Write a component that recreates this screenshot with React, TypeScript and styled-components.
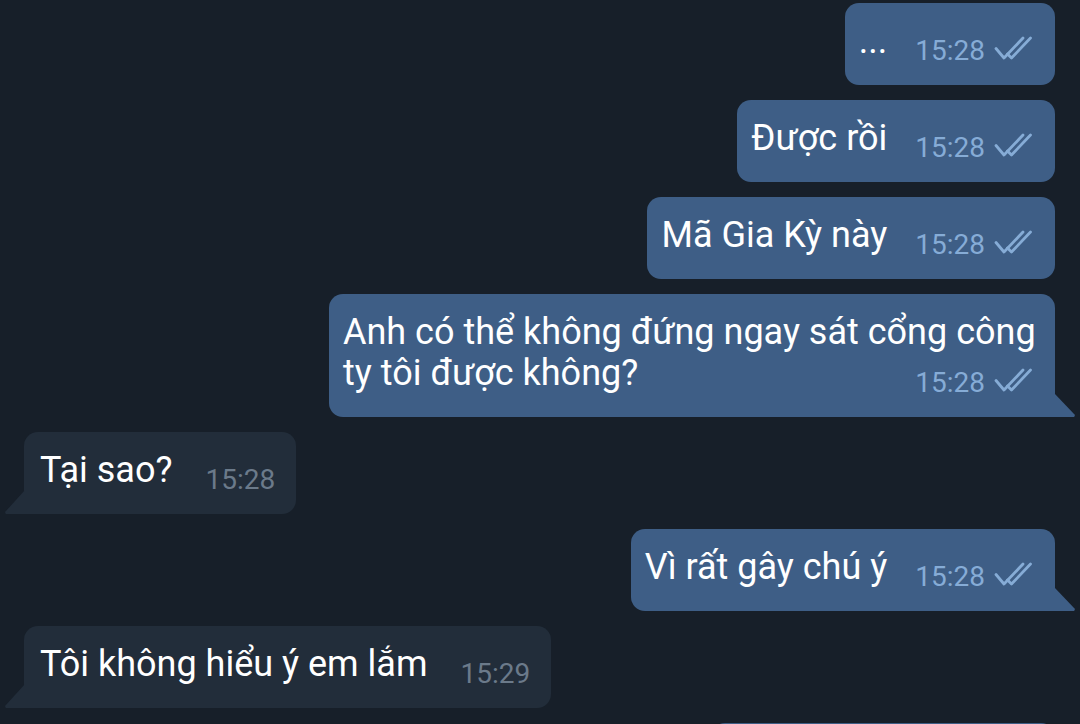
import React from 'react';
import styled, { createGlobalStyle, css } from 'styled-components';

const Global = createGlobalStyle`
  html, body { margin: 0; padding: 0; background: #171f29; }
  body { font-family: Roboto, "Noto Sans", "Liberation Sans", sans-serif; overflow: hidden; }
`;

const Chat = styled.div`
  width: 1080px;
  height: 724px;
  box-sizing: border-box;
  padding: 3px 25px 0 24px;
  display: flex;
  flex-direction: column;
  gap: 15px;
  background: #171f29;
  overflow: hidden;
`;

const Row = styled.div<{ $out: boolean }>`
  display: flex;
  flex-shrink: 0;
  justify-content: ${(p) => (p.$out ? 'flex-end' : 'flex-start')};
`;

const Bubble = styled.div<{ $out: boolean; $tail: boolean }>`
  position: relative;
  display: flow-root;
  max-width: 726px;
  box-sizing: border-box;
  padding: 18px 15px 20px ${(p) => (p.$out ? 14 : 16)}px;
  border-radius: 14px;
  background: ${(p) => (p.$out ? '#3e5e86' : '#222d3a')};
  color: #ffffff;
  font-size: 36px;
  line-height: 41px;
  letter-spacing: 0;
  ${(p) =>
    p.$tail &&
    (p.$out
      ? css`
          border-bottom-right-radius: 0;
          &::after {
            content: '';
            position: absolute;
            right: -20px;
            bottom: 0;
            width: 21px;
            height: 24px;
            background: inherit;
            clip-path: polygon(0 0, 100% 92%, 96% 100%, 0 100%);
          }
        `
      : css`
          border-bottom-left-radius: 0;
          &::after {
            content: '';
            position: absolute;
            left: -19px;
            bottom: 0;
            width: 20px;
            height: 24px;
            background: inherit;
            clip-path: polygon(100% 0, 100% 100%, 4% 100%, 0 92%);
          }
        `)}
`;

const Meta = styled.span<{ $out: boolean }>`
  float: right;
  display: flex;
  align-items: flex-end;
  gap: 9px;
  height: 28px;
  margin: 16px 0 0 ${(p) => (p.$out ? 28 : 33)}px;
  padding-right: ${(p) => (p.$out ? 8 : 6)}px;
  font-size: 28px;
  line-height: 28px;
  color: ${(p) => (p.$out ? '#86acd6' : '#6b7a8a')};
`;

const Time = styled.span`
  display: block;
`;

const Checks = styled.svg`
  display: block;
  flex-shrink: 0;
  margin-bottom: 3px;
`;

const DoubleCheck = () => (
  <Checks width="38" height="26" viewBox="0 0 38 26" fill="none">
    <path d="M2 12.5 L10 22 L29 2" stroke="currentColor" strokeWidth="2.8" strokeLinecap="round" strokeLinejoin="round" />
    <path d="M13.5 18 L17.5 22 L36.5 2" stroke="currentColor" strokeWidth="2.8" strokeLinecap="round" strokeLinejoin="round" />
  </Checks>
);

type Msg = { text: string; time: string; out: boolean; tail?: boolean };

const messages: Msg[] = [
  { text: '...', time: '15:28', out: true },
  { text: 'Được rồi', time: '15:28', out: true },
  { text: 'Mã Gia Kỳ này', time: '15:28', out: true },
  { text: 'Anh có thể không đứng ngay sát cổng công ty tôi được không?', time: '15:28', out: true, tail: true },
  { text: 'Tại sao?', time: '15:28', out: false, tail: true },
  { text: 'Vì rất gây chú ý', time: '15:28', out: true, tail: true },
  { text: 'Tôi không hiểu ý em lắm', time: '15:29', out: false, tail: true },
  { text: 'Ừ, vậy nhé', time: '15:29', out: true },
];

export default function App() {
  return (
    <>
      <Global />
      <Chat>
        {messages.map((m, i) => (
          <Row key={i} $out={m.out}>
            <Bubble $out={m.out} $tail={!!m.tail}>
              {m.text}
              <Meta $out={m.out}>
                <Time>{m.time}</Time>
                {m.out && <DoubleCheck />}
              </Meta>
            </Bubble>
          </Row>
        ))}
      </Chat>
    </>
  );
}
